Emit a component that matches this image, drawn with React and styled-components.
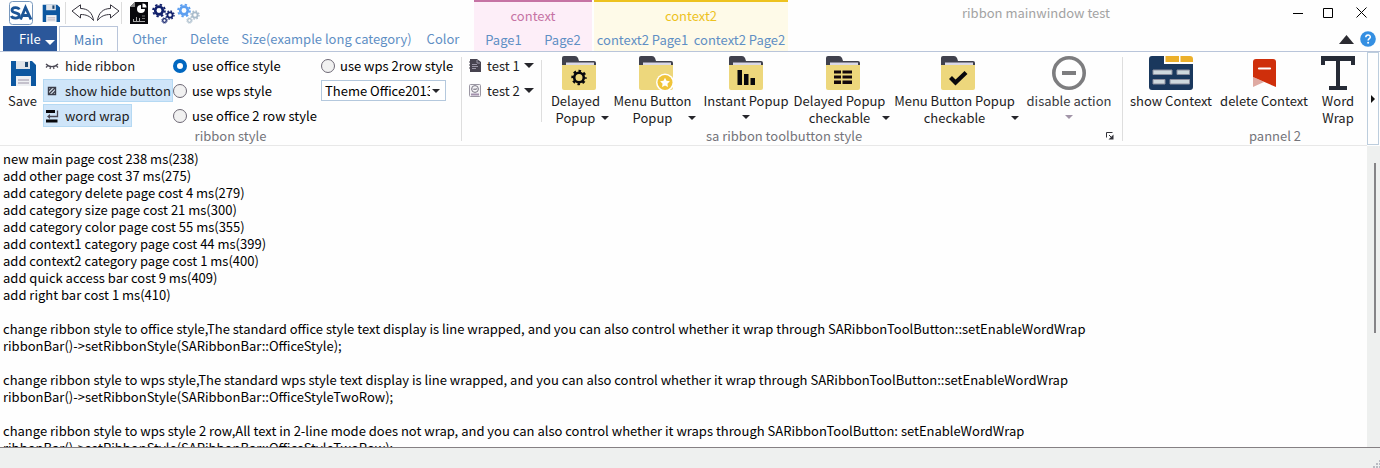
import React from "react";
import styled, { createGlobalStyle, css } from "styled-components";

const GlobalStyle = createGlobalStyle`
  *, *::before, *::after { box-sizing: border-box; }
  body { margin: 0; background: #fefefe; }
  body, button, input, select, textarea {
    font-family: "Noto Sans CJK SC", "Noto Sans", sans-serif;
    font-size: 13px;
    line-height: 17px;
  }
  button { margin: 0; padding: 0; border: 0; background: none; color: inherit; cursor: default; white-space: nowrap; }
  svg { display: block; flex: none; }
`;

const Window = styled.div`
  display: flex;
  flex-direction: column;
  height: 100vh;
  overflow: hidden;
  color: #1c1c22;
`;

/* ---------- header ---------- */
const Header = styled.header`
  display: flex;
  flex: none;
  height: 52px;
  border-bottom: 1px solid #b9c5da;
`;
const HeaderMain = styled.div`
  display: flex;
  flex-direction: column;
  margin-right: 3px;
`;
const QuickBar = styled.div`
  display: flex;
  align-items: center;
  height: 27px;
  padding-left: 9px;
`;
const LogoSlot = styled.span`
  margin-right: 9px;
`;
const QuickButton = styled.button`
  display: flex;
  justify-content: center;
  width: ${(p) => p.$width || 25}px;
`;
const QuickDivider = styled.span`
  width: 1px;
  height: 22px;
  margin: 0 4px 0 ${(p) => p.$left || 5}px;
  background: #dcdcdc;
`;
const TabRow = styled.nav`
  display: flex;
  flex: 1;
  padding-left: 3px;
`;
const FileButton = styled.button`
  display: flex;
  align-items: center;
  width: 54px;
  margin-right: 2px;
  padding-left: 16px;
  gap: 4px;
  height: 25px;
  background: #2b579a;
  color: #fff;
  svg { margin-top: 8px; }
`;
const Tab = styled.button`
  width: ${(p) => p.$width}px;
  height: 25px;
  padding-bottom: 1px;
  color: #5f8fc4;
  ${(p) =>
    p.$active &&
    css`
      background: #fefefe;
      border: 1px solid #b9c5da;
      border-bottom: 0;
      padding-bottom: 0;
      color: #4a7ebb;
    `}
`;
const ContextGroup = styled.section`
  display: flex;
  flex-direction: column;
  width: ${(p) => p.$width}px;
  margin-right: 2px;
  border-top: 2px solid ${(p) => p.$accent};
  background: ${(p) => p.$fill};
`;
const ContextTitle = styled.div`
  height: 26px;
  line-height: 28px;
  text-align: center;
  color: ${(p) => p.$accent};
`;
const ContextTabs = styled.div`
  display: grid;
  grid-template-columns: 1fr 1fr;
  flex: 1;
  button { color: #5f8fc4; padding-bottom: 1px; }
`;
const TitleArea = styled.div`
  flex: 1;
  padding-top: 4px;
  text-align: center;
  color: #a3a3a3;
`;
const WindowTools = styled.div`
  display: flex;
  flex-direction: column;
  justify-content: space-between;
  width: 98px;
`;
const WindowButtons = styled.div`
  display: grid;
  grid-template-columns: 32px 28px 1fr;
  height: 25px;
  button { display: grid; place-items: center; }
`;
const RightBar = styled.div`
  display: flex;
  justify-content: flex-end;
  align-items: center;
  gap: 6px;
  height: 24px;
  padding-right: 4px;
`;

/* ---------- ribbon ---------- */
const Ribbon = styled.div`
  display: flex;
  flex: none;
  height: 94px;
`;
const PanelStrip = styled.div`
  display: flex;
  flex: 1;
  min-width: 0;
  overflow: hidden;
  border-bottom: 1px solid #e8e8e8;
`;
const Panel = styled.section`
  display: grid;
  grid-template-rows: 76px 15px;
  flex: none;
  width: ${(p) => p.$width}px;
`;
const PanelBody = styled.div`
  display: flex;
  padding: 1px ${(p) => p.$pad || 4}px 0;
`;
const PanelFooter = styled.div`
  display: flex;
  align-items: center;
  padding-right: ${(p) => (p.$launcher ? 8 : 0)}px;
`;
const PanelTitle = styled.div`
  flex: 1;
  text-align: center;
  line-height: 15px;
  color: #74747a;
`;
const PanelDivider = styled.span`
  flex: none;
  width: 1px;
  margin: 5px 0 4px;
  background: #dedede;
`;
const InnerDivider = styled.span`
  width: 1px;
  height: 62px;
  margin: 7px 4px 0 0;
  background: #dedede;
`;
const Rows = styled.div`
  display: grid;
  grid-template-rows: repeat(3, 25px);
  align-items: center;
  justify-items: start;
  align-content: start;
  width: ${(p) => p.$width}px;
`;
const SmallButton = styled.button`
  display: flex;
  align-items: center;
  gap: ${(p) => p.$gap || 6}px;
  height: 23px;
  padding: 0 1px;
  border: 1px solid ${(p) => (p.$checked ? "#b5d9f3" : "transparent")};
  background: ${(p) => (p.$checked ? "#cfe5f9" : "transparent")};
`;
const MenuArrow = styled.span`
  margin-left: -2px;
`;
const RadioLabel = styled.label`
  display: flex;
  align-items: center;
  gap: 5px;
  white-space: nowrap;
  color: #000;
`;
const Radio = styled.input`
  appearance: none;
  width: 14px;
  height: 14px;
  margin: 0;
  border: 1px solid #6d6875;
  border-radius: 50%;
  background: #f1f1f1;
  &:checked { border: 4px solid #0067c0; background: #fff; }
`;
const ComboBox = styled.div`
  display: grid;
  align-items: center;
  width: 125px;
  height: 21px;
  border: 1px solid #b4c8dd;
  background: #fff;
  > * { grid-area: 1 / 1; }
  svg { justify-self: end; margin-right: 5px; pointer-events: none; }
`;
const Select = styled.select`
  appearance: none;
  width: 108px;
  height: 19px;
  padding: 0 0 0 3px;
  border: 0;
  background: none;
  color: #000;
  text-overflow: clip;
  outline: 0;
`;
const BigButton = styled.button`
  display: flex;
  flex-direction: column;
  align-items: center;
  flex: none;
  width: ${(p) => p.$width}px;
  height: 75px;
  margin-right: 1px;
  padding-top: 3px;
  color: ${(p) => (p.disabled ? "#38383c" : "#1c1c22")};
`;
const IconSlot = styled.span`
  display: grid;
  place-items: center;
  height: 36px;
  padding-bottom: 2px;
`;
const SplitLabel = styled.span`
  display: flex;
  justify-content: flex-end;
  align-items: flex-end;
  align-self: stretch;
  padding-right: 3px;
  svg { margin-bottom: 6px; }
`;
const Lines = styled.span`
  display: flex;
  flex: 1;
  flex-direction: column;
  align-items: center;
  min-width: 0;
  margin-right: -4px;
`;
const ArrowBelow = styled.span`
  padding-top: 6px;
`;
const ScrollRight = styled.button`
  display: grid;
  place-items: center;
  flex: none;
  width: 12px;
  height: 93px;
  margin-right: 1px;
  border: 1px solid #bccddd;
  background: #fefefe;
`;

/* ---------- log area ---------- */
const LogArea = styled.main`
  display: flex;
  flex: 1;
  min-height: 0;
`;
const LogText = styled.textarea`
  flex: 1;
  min-width: 0;
  margin: 0;
  padding: 4px 3px 0;
  border: 0;
  outline: 0;
  resize: none;
  overflow: hidden;
  background: #fefefe;
  color: #000;
`;
const ScrollTrack = styled.div`
  width: 13px;
  padding: 17px 4px 0 7px;
  background: #eef0ef;
`;
const ScrollThumb = styled.div`
  height: 60%;
  max-height: 172px;
  background: #858487;
`;
const StatusBar = styled.footer`
  display: flex;
  flex: none;
  justify-content: flex-end;
  align-items: flex-end;
  height: 21px;
  border-top: 1px solid #858083;
  background: #eef0ef;
`;

/* ---------- icons ---------- */
const Arrow = ({ w = 8, color = "#26262b" }) => (
  <svg width={w} height={w > 8 ? 5 : 4} viewBox="0 0 8 4" preserveAspectRatio="none">
    <path d="M0 0h8L4 4z" fill={color} />
  </svg>
);
const Floppy = ({ size }) => (
  <svg width={size} height={size} viewBox="0 0 26 26">
    <path d="M1 1h21l4 4v21H1z" fill="#0c57a0" />
    <path d="M6 1h14v8H6z" fill="#dfe3e9" />
    <path d="M15 2h3v5h-3z" fill="#1c456e" />
    <path d="M6 16h15v10H6z" fill="#eef0f3" />
    <path d="M8 20h11M8 23h11" stroke="#9a92a5" />
  </svg>
);
const Logo = () => (
  <svg width="24" height="24" viewBox="0 0 24 24">
    <rect x=".5" y=".5" width="23" height="23" rx="3" fill="#fff" stroke="#7898bd" />
    <path d="M10.300 8.500C9 5.800 3 6 3 9.200c0 3.400 7.300 2 7.300 5.300 0 3.400-7 3.200-8 .5" fill="none" stroke="#1c5596" strokeWidth="2.800" />
    <path d="M11.500 18.500 16.500 6.500 22 18.500M13.500 14.500h6.500" fill="none" stroke="#1c5596" strokeWidth="2.800" />
  </svg>
);
const Undo = ({ flip }) => (
  <svg width="24" height="18" viewBox="0 0 24 18">
    <path
      transform={flip ? "translate(24 0) scale(-1 1)" : undefined}
      d="M1 7 9.500 .8v3.700C17 4.500 21.500 9 22.500 16.500 19 12 15 10.500 9.500 10.500v3.500z"
      fill="#fff" stroke="#34323c" strokeLinejoin="round"
    />
  </svg>
);
const ChartFile = () => (
  <svg width="18" height="22" viewBox="0 0 18 22">
    <path d="M5 0h13v22H0V5z" fill="#08080c" />
    <path d="M0 5h5V0z" fill="#888" />
    <path d="M11 3a4 4 0 1 0 4 4h-4z" fill="#fff" />
    <path d="M12.500 1.500v4h4a4 4 0 0 0-4-4z" fill="#fff" />
    <path d="M3.500 19v-2M6.500 19v-4M9.500 19v-3M3 19.500h12" stroke="#aaa" />
    <path d="M12 14h3M12 16.500h3" stroke="#777" />
  </svg>
);
const GearShape = ({ x, y, r, color }) => (
  <g fill="none" stroke={color}>
    <circle cx={x} cy={y} r={r} strokeWidth={r * 0.7} />
    <circle cx={x} cy={y} r={r * 1.55} strokeWidth={r * 0.5} strokeDasharray={`${r * 0.609} ${r * 0.609}`} />
  </g>
);
const Gears = ({ a, b }) => (
  <svg width="23" height="21" viewBox="0 0 23 21">
    <GearShape x={7} y={7.500} r={3.8} color={a} />
    <GearShape x={18} y={12} r={2.600} color={b} />
    <GearShape x={12.500} y={17.500} r={1.800} color={b} />
  </svg>
);
const EyeClosed = () => (
  <svg width="14" height="14" viewBox="0 0 14 14">
    <path d="M1 5c3 3.500 9 3.500 12 0M2.500 7 1 8.500M5.500 8 5 10M8.500 8l.5 2M11.500 7 13 8.500" fill="none" stroke="#4b4854" strokeWidth="1.200" />
  </svg>
);
const HideSquare = () => (
  <svg width="14" height="14" viewBox="0 0 14 14">
    <path d="M3.500 3.500h7v7h-7z" fill="#dce7f1" stroke="#3a3c49" strokeWidth="1.400" />
    <path d="m3.500 10.500 7-7M4 6.500 6.500 4M7.500 10 10 7.500" stroke="#3a3c49" strokeWidth="1.300" />
  </svg>
);
const WrapIcon = () => (
  <svg width="14" height="14" viewBox="0 0 14 14">
    <path d="M1 2.500h9M1 12h11.500" stroke="#08080c" strokeWidth="3" />
    <path d="M12.500 1.500v6H4" fill="none" stroke="#494754" strokeWidth="1.300" />
    <path d="M5 5 2 7.500 5 10z" fill="#494754" />
  </svg>
);
const DocIcon = () => (
  <svg width="12" height="13" viewBox="0 0 12 13">
    <path d="M1 0h7l4 3v10H1z" fill="#47434f" />
    <path d="M8 1v3h3M3 5.500h5M3 7.500h6M3 9.500h4" fill="none" stroke="#9b96a6" />
    <path d="M0 3h2M0 6h2M0 9h2" stroke="#47434f" />
  </svg>
);
const BadgeIcon = () => (
  <svg width="12" height="13" viewBox="0 0 12 13">
    <rect x=".5" y=".5" width="11" height="12" rx="1" fill="#f4f3f6" stroke="#9b97a3" />
    <circle cx="6" cy="5" r="3.400" fill="none" stroke="#7b7784" />
    <path d="m4 4.500 1.200 1.500L6 4.500 6.800 6 8 4" fill="none" stroke="#7b7784" strokeWidth=".8" />
    <path d="M2 10.500h8" stroke="#a391ad" strokeWidth="2" />
  </svg>
);
const glyphs = {
  gear: (
    <g fill="none" stroke="#08080c">
      <circle cx="17" cy="21.500" r="4.800" strokeWidth="2.600" />
      <circle cx="17" cy="21.500" r="6.500" strokeWidth="2.400" strokeDasharray="2.553 2.553" strokeDashoffset="1.276" />
    </g>
  ),
  star: (
    <g>
      <circle cx="26" cy="26.500" r="9" fill="#fff" />
      <circle cx="26" cy="26.500" r="7.500" fill="#f0c43a" />
      <path d="m26 21.700 1.500 3.100 3.400.5-2.500 2.400.6 3.400-3-1.600-3 1.600.6-3.400-2.500-2.400 3.400-.5z" fill="#fff" />
    </g>
  ),
  bars: <path d="M8.500 14h4.500v15H8.500zM15 18h4.500v11H15zM21.500 22H26v7h-4.500z" fill="#08080c" />,
  table: <path d="M8 14.500h7v3H8zM16.500 14.500H26v3h-9.500zM8 19.500h7v3H8zM16.500 19.500H26v3h-9.500zM8 24.500h7v3.500H8zM16.500 24.500H26v3.500h-9.500z" fill="#14080c" />,
  check: <path d="m9.500 21.500 5 5L25 16.500" fill="none" stroke="#08080c" strokeWidth="4.200" />,
};
const Folder = ({ glyph }) => (
  <svg width="34" height="34" viewBox="0 0 34 34">
    <path d="M0 10V2q0-2 2-2h11q2 0 3 2l1 3h15q2 0 2 2v3z" fill="#40414d" />
    <path d="M4 6.500h28V10H4z" fill="#d9d8e6" />
    <path d="M0 9h34v23q0 2-2 2H2q-2 0-2-2z" fill="#edd77c" />
    {glyphs[glyph]}
  </svg>
);
const DisabledIcon = () => (
  <svg width="34" height="34" viewBox="0 0 34 34">
    <circle cx="17" cy="17" r="15.200" fill="none" stroke="#7d7d7f" strokeWidth="3.600" />
    <path d="M10 17h14" stroke="#7d7d7f" strokeWidth="4" />
  </svg>
);
const ShowContextIcon = () => (
  <svg width="44" height="34" viewBox="0 0 44 34">
    <path d="M3 0h12v8h29v23q0 3-3 3H3q-3 0-3-3V3q0-3 3-3z" fill="#1a385d" />
    <path d="M16.500 0H30v6H16.500zM31.500 0H41q3 0 3 3v3H31.500z" fill="#ecb02b" />
    <path d="M4 14h19v4.500H4zM28 14h12.500v4.500H28zM4 23.500h12V28H4zM21 23.500h19.500V28H21z" fill="#cfd9de" stroke="#8c8f9f" strokeWidth="1" />
  </svg>
);
const DeleteContextIcon = () => (
  <svg width="23" height="28" viewBox="0 0 23 28">
    <path d="M0 18v10l11-5z" fill="#dfaaa2" />
    <path d="M0 3q0-3 3-3h17q3 0 3 3v25L0 18z" fill="#cf2f0b" />
    <path d="M6 9.500h11" stroke="#fff" strokeWidth="2.200" strokeLinecap="round" />
  </svg>
);
const TypeIcon = () => (
  <svg width="34" height="34" viewBox="0 0 34 34">
    <path d="M0 0h34v9h-4V5H19v25h7v4H8v-4h7V5H4v4H0z" fill="#262b36" />
  </svg>
);
const Launcher = () => (
  <svg width="8" height="8" viewBox="0 0 8 8">
    <path d="M.5 5.500v-5h6M3 3l3 3" fill="none" stroke="#33333a" />
    <path d="M7.500 2.500v5h-5z" fill="#33333a" />
  </svg>
);
const Minimize = () => (
  <svg width="10" height="10" viewBox="0 0 10 10"><path d="M0 5.500h10" stroke="#000" /></svg>
);
const Maximize = () => (
  <svg width="10" height="10" viewBox="0 0 10 10"><path d="M.5.5h9v9h-9z" fill="none" stroke="#000" /></svg>
);
const Close = () => (
  <svg width="11" height="11" viewBox="0 0 11 11"><path d="m.5.5 10 10m0-10-10 10" stroke="#000" /></svg>
);
const Collapse = () => (
  <svg width="15" height="9" viewBox="0 0 15 9"><path d="M0 9 7.500 0 15 9z" fill="#2b2b31" /></svg>
);
const Help = () => (
  <svg width="16" height="16" viewBox="0 0 16 16">
    <circle cx="8" cy="8" r="7.800" fill="#348fe2" />
    <path d="M5.800 6.300C5.800 3.300 10.300 3.300 10.300 6c0 1.700-2.200 1.700-2.200 3.600" fill="none" stroke="#fff" strokeWidth="1.500" />
    <circle cx="8.100" cy="11.800" r="1" fill="#fff" />
  </svg>
);
const Grip = () => (
  <svg width="8" height="8" viewBox="0 0 8 8">
    <path d="M1 6h2v2H1zM4 6h2v2H4zM7 6h1v2H7zM4 3h2v2H4zM7 3h1v2H7zM7 0h1v2H7z" fill="#b9bac2" />
  </svg>
);
const RightTriangle = () => (
  <svg width="4" height="8" viewBox="0 0 4 8"><path d="m0 0 4 4-4 4z" fill="#111" /></svg>
);

/* ---------- data ---------- */
const tabs = [
  ["Main", 59],
  ["Other", 63],
  ["Delete", 57],
  ["Size(example long category)", 177],
  ["Color", 56],
];
const contexts = [
  { name: "context", width: 118, accent: "#c673a4", fill: "#fdeef8", pages: ["Page1", "Page2"] },
  { name: "context2", width: 194, accent: "#edc21f", fill: "#fefae8", pages: ["context2 Page1", "context2 Page2"] },
];
const popups = [
  { glyph: "gear", width: 66, lines: ["Delayed", "Popup"] },
  { glyph: "star", width: 86, lines: ["Menu Button", "Popup"] },
  { glyph: "bars", width: 92, lines: ["Instant Popup"] },
  { glyph: "table", width: 100, lines: ["Delayed Popup", "checkable"] },
  { glyph: "check", width: 128, lines: ["Menu Button Popup", "checkable"] },
];
const log = `new main page cost 238 ms(238)
add other page cost 37 ms(275)
add category delete page cost 4 ms(279)
add category size page cost 21 ms(300)
add category color page cost 55 ms(355)
add context1 category page cost 44 ms(399)
add context2 category page cost 1 ms(400)
add quick access bar cost 9 ms(409)
add right bar cost 1 ms(410)

change ribbon style to office style,The standard office style text display is line wrapped, and you can also control whether it wrap through SARibbonToolButton::setEnableWordWrap
ribbonBar()->setRibbonStyle(SARibbonBar::OfficeStyle);

change ribbon style to wps style,The standard wps style text display is line wrapped, and you can also control whether it wrap through SARibbonToolButton::setEnableWordWrap
ribbonBar()->setRibbonStyle(SARibbonBar::OfficeStyleTwoRow);

change ribbon style to wps style 2 row,All text in 2-line mode does not wrap, and you can also control whether it wraps through SARibbonToolButton: setEnableWordWrap
ribbonBar()->setRibbonStyle(SARibbonBar::OfficeStyleTwoRow);`;

const StyleRadio = ({ label, checked }) => (
  <RadioLabel>
    <Radio type="radio" name="ribbon-style" defaultChecked={checked} />
    {label}
  </RadioLabel>
);

const PopupButton = ({ glyph, width, lines }) => (
  <BigButton $width={width}>
    <IconSlot><Folder glyph={glyph} /></IconSlot>
    {lines.length > 1 ? (
      <SplitLabel>
        <Lines>{lines.map((line) => <span key={line}>{line}</span>)}</Lines>
        <Arrow />
      </SplitLabel>
    ) : (
      <>
        <span>{lines[0]}</span>
        <ArrowBelow><Arrow /></ArrowBelow>
      </>
    )}
  </BigButton>
);

export default function App() {
  return (
    <>
      <GlobalStyle />
      <Window>
        <Header>
          <HeaderMain>
            <QuickBar>
              <LogoSlot><Logo /></LogoSlot>
              <QuickButton $width={18} aria-label="save"><Floppy size={18} /></QuickButton>
              <QuickDivider />
              <QuickButton aria-label="undo"><Undo /></QuickButton>
              <QuickButton aria-label="redo"><Undo flip /></QuickButton>
              <QuickDivider $left={1} />
              <QuickButton aria-label="report"><ChartFile /></QuickButton>
              <QuickButton aria-label="settings"><Gears a="#11206b" b="#11206b" /></QuickButton>
              <QuickButton aria-label="options"><Gears a="#5d9ff0" b="#a9bccb" /></QuickButton>
            </QuickBar>
            <TabRow>
              <FileButton>File<Arrow w={10} color="#fff" /></FileButton>
              {tabs.map(([name, width], i) => (
                <Tab key={name} $width={width} $active={i === 0}>{name}</Tab>
              ))}
            </TabRow>
          </HeaderMain>
          {contexts.map((c) => (
            <ContextGroup key={c.name} $width={c.width} $accent={c.accent} $fill={c.fill}>
              <ContextTitle $accent={c.accent}>{c.name}</ContextTitle>
              <ContextTabs>{c.pages.map((p) => <button key={p}>{p}</button>)}</ContextTabs>
            </ContextGroup>
          ))}
          <TitleArea>ribbon mainwindow test</TitleArea>
          <WindowTools>
            <WindowButtons>
              <button aria-label="minimize"><Minimize /></button>
              <button aria-label="maximize"><Maximize /></button>
              <button aria-label="close"><Close /></button>
            </WindowButtons>
            <RightBar>
              <button aria-label="collapse ribbon"><Collapse /></button>
              <button aria-label="help"><Help /></button>
            </RightBar>
          </WindowTools>
        </Header>

        <Ribbon>
          <PanelStrip>
            <Panel $width={461}>
              <PanelBody $pad={3}>
                <BigButton $width={39}>
                  <IconSlot><Floppy size={26} /></IconSlot>
                  <span>Save</span>
                </BigButton>
                <Rows $width={130}>
                  <SmallButton><EyeClosed />hide ribbon</SmallButton>
                  <SmallButton $checked><HideSquare />show hide button</SmallButton>
                  <SmallButton $checked><WrapIcon />word wrap</SmallButton>
                </Rows>
                <Rows $width={148}>
                  <StyleRadio label="use office style" checked />
                  <StyleRadio label="use wps style" />
                  <StyleRadio label="use office 2 row style" />
                </Rows>
                <Rows $width={130}>
                  <StyleRadio label="use wps 2row style" />
                  <ComboBox>
                    <Select aria-label="theme" defaultValue="2013">
                      <option value="2013">Theme Office2013</option>
                    </Select>
                    <Arrow />
                  </ComboBox>
                </Rows>
              </PanelBody>
              <PanelFooter><PanelTitle>ribbon style</PanelTitle></PanelFooter>
            </Panel>
            <PanelDivider />
            <Panel $width={660}>
              <PanelBody $pad={5}>
                <Rows $width={74}>
                  <SmallButton><DocIcon />test 1<MenuArrow><Arrow w={10} /></MenuArrow></SmallButton>
                  <SmallButton><BadgeIcon />test 2<MenuArrow><Arrow w={10} /></MenuArrow></SmallButton>
                </Rows>
                <InnerDivider />
                {popups.map((p) => <PopupButton key={p.glyph} {...p} />)}
                <BigButton $width={92} disabled>
                  <IconSlot><DisabledIcon /></IconSlot>
                  <span>disable action</span>
                  <ArrowBelow><Arrow color="#a295a8" /></ArrowBelow>
                </BigButton>
              </PanelBody>
              <PanelFooter $launcher>
                <PanelTitle>sa ribbon toolbutton style</PanelTitle>
                <button aria-label="panel options"><Launcher /></button>
              </PanelFooter>
            </Panel>
            <PanelDivider />
            <Panel $width={304}>
              <PanelBody $pad={4}>
                <BigButton $width={88}>
                  <IconSlot><ShowContextIcon /></IconSlot>
                  <span>show Context</span>
                </BigButton>
                <BigButton $width={96}>
                  <IconSlot><DeleteContextIcon /></IconSlot>
                  <span>delete Context</span>
                </BigButton>
                <BigButton $width={50}>
                  <IconSlot><TypeIcon /></IconSlot>
                  <span>Word</span>
                  <span>Wrap</span>
                </BigButton>
              </PanelBody>
              <PanelFooter><PanelTitle>pannel 2</PanelTitle></PanelFooter>
            </Panel>
          </PanelStrip>
          <ScrollRight aria-label="scroll right"><RightTriangle /></ScrollRight>
        </Ribbon>

        <LogArea>
          <LogText readOnly aria-label="log" value={log} spellCheck={false} />
          <ScrollTrack><ScrollThumb /></ScrollTrack>
        </LogArea>
        <StatusBar><Grip /></StatusBar>
      </Window>
    </>
  );
}
